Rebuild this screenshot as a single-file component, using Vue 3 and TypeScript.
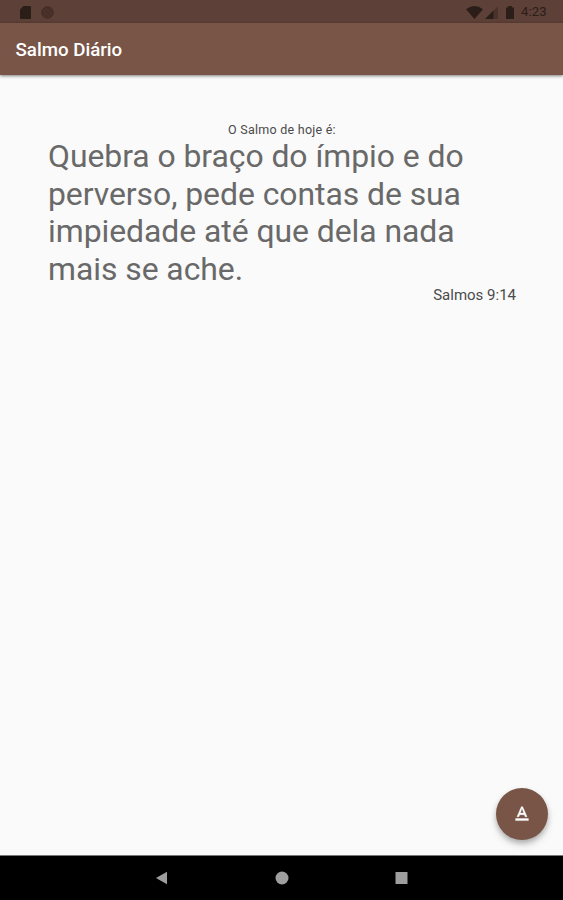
<script setup lang="ts">
const title = 'Salmo Diário'
const intro = 'O Salmo de hoje é:'
const verse: string[] = [
  'Quebra o braço do ímpio e do',
  'perverso, pede contas de sua',
  'impiedade até que dela nada',
  'mais se ache.',
]
const source = 'Salmos 9:14'
const time = '4:23'
</script>

<template>
  <div class="screen">
    <div class="status">
      <svg class="sd" viewBox="0 0 11 13"><path d="M3.5 0H10Q11 0 11 1V12Q11 13 10 13H1Q0 13 0 12V3.5Z" /></svg>
      <svg class="sync" viewBox="0 0 13 13">
        <circle cx="6.5" cy="6.5" r="5.8" />
        <path d="M3 3.2L10.2 10M6 1.5L11.4 7M1.6 6L7 11.3" />
      </svg>
      <span class="spacer"></span>
      <svg class="wifi" viewBox="0 0 17 13"><path d="M0 3.2Q8.5-3.2 17 3.2L8.5 13Z" /></svg>
      <svg class="signal" viewBox="0 0 13 13">
        <path class="faint" d="M13 0V13H0Z" />
        <path d="M8.5 4.5V13H0Z" />
      </svg>
      <svg class="battery" viewBox="0 0 8 13"><path d="M2.2 0H5.8V1.4H8V13H0V1.4H2.2Z" /></svg>
      <span class="time">{{ time }}</span>
    </div>
    <header class="bar"><h1>{{ title }}</h1></header>
    <main class="content">
      <p class="intro">{{ intro }}</p>
      <p class="verse"><span v-for="line in verse" :key="line">{{ line }}</span></p>
      <p class="source">{{ source }}</p>
      <button class="fab" aria-label="Formatar texto">
        <svg viewBox="0 0 24 24"><path d="M5 17v2.200h14V17H5zm4.500-4.200h5l.9 2.200h2.100L12.750 4h-1.500L6.500 15h2.100l.9-2.200zM12 5.980L13.870 11h-3.740L12 5.980z" /></svg>
      </button>
    </main>
    <nav class="nav">
      <svg viewBox="0 0 14 14"><path d="M1 7L12 .8V13.200Z" /></svg>
      <svg viewBox="0 0 14 14"><circle cx="7" cy="7" r="6.500" /></svg>
      <svg viewBox="0 0 14 14"><rect x=".5" y="1" width="12" height="12" rx=".5" /></svg>
    </nav>
  </div>
</template>

<style>
body {
  margin: 0;
}
</style>

<style scoped>
.screen {
  display: flex;
  flex-direction: column;
  height: 900px;
  background: #fafafa;
  font-family: Roboto, "Liberation Sans", sans-serif;
}
.status {
  display: flex;
  align-items: center;
  box-sizing: border-box;
  height: 23px;
  padding: 1px 15px 0 20px;
  background: #5d4037;
  color: #2b1d18;
  fill: #2b1d18;
}
.sd {
  width: 11px;
  height: 13px;
}
.sync {
  width: 13px;
  height: 13px;
  margin-left: 10px;
  fill: #4b332b;
  stroke: #412c25;
  stroke-width: 1;
}
.spacer {
  flex: 1;
}
.wifi {
  width: 17px;
  height: 13px;
}
.signal {
  width: 13px;
  height: 13px;
  margin-left: 2px;
}
.faint {
  opacity: .35;
}
.battery {
  width: 8px;
  height: 13px;
  margin-left: 8px;
}
.time {
  width: 27px;
  margin-left: 7px;
  font-size: 13px;
  line-height: 20px;
  letter-spacing: .2px;
}
.bar {
  position: relative;
  display: flex;
  align-items: center;
  box-sizing: border-box;
  height: 52px;
  padding: 2px 0 0 15.500px;
  background: #795548;
  box-shadow: 0 1px 3px rgba(0, 0, 0, .5);
}
h1 {
  margin: 0;
  color: #fff;
  font-size: 18.700px;
  font-weight: 500;
  line-height: 26px;
}
.content {
  display: flex;
  flex: 1;
  flex-direction: column;
  padding: 48px 47px 0 48px;
}
p {
  margin: 0;
}
.intro {
  margin-bottom: 2px;
  color: #4a4a4a;
  font-size: 12.500px;
  line-height: 13px;
  text-align: center;
  letter-spacing: .25px;
}
.verse {
  color: #696969;
  font-size: 31.900px;
  line-height: 37.500px;
  letter-spacing: -.045px;
}
.verse span {
  display: block;
  white-space: nowrap;
}
.source {
  color: #4a4a4a;
  font-size: 15px;
  line-height: 15px;
  text-align: right;
}
.fab {
  display: flex;
  align-items: center;
  justify-content: center;
  align-self: flex-end;
  width: 52px;
  height: 52px;
  margin: auto -32px 15px 0;
  padding: 0;
  border: 0;
  border-radius: 50%;
  background: #795548;
  box-shadow: 0 3px 5px rgba(0, 0, 0, .22), 0 5px 9px rgba(0, 0, 0, .12);
}
.fab svg {
  width: 22px;
  height: 22px;
  fill: #fff;
  stroke: #fff;
  stroke-width: .4;
}
.nav {
  display: flex;
  align-items: center;
  justify-content: center;
  gap: 106px;
  box-sizing: border-box;
  height: 45px;
  border-top: 1px solid #777;
  background: #000;
}
.nav svg {
  width: 14px;
  height: 14px;
  fill: #9e9e9e;
}
</style>
